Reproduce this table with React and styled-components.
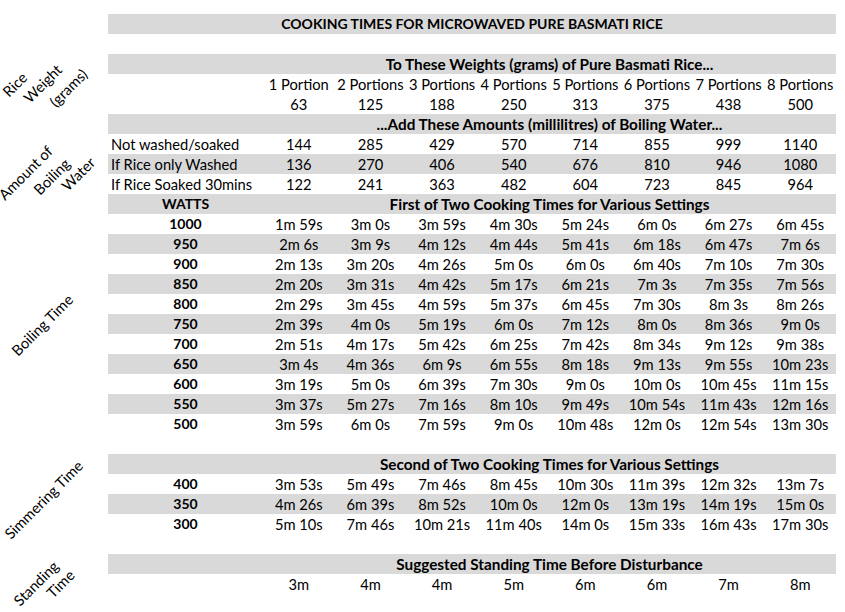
import React from 'react';
import styled, { createGlobalStyle } from 'styled-components';

const portions = ['1 Portion', '2 Portions', '3 Portions', '4 Portions', '5 Portions', '6 Portions', '7 Portions', '8 Portions'];
const weights = [63, 125, 188, 250, 313, 375, 438, 500];

const water = [
  { label: 'Not washed/soaked', values: [144, 285, 429, 570, 714, 855, 999, 1140] },
  { label: 'If Rice only Washed', values: [136, 270, 406, 540, 676, 810, 946, 1080], shade: true },
  { label: 'If Rice Soaked 30mins', values: [122, 241, 363, 482, 604, 723, 845, 964] },
];

const boiling = [
  [1000, '1m 59s', '3m 0s', '3m 59s', '4m 30s', '5m 24s', '6m 0s', '6m 27s', '6m 45s'],
  [950, '2m 6s', '3m 9s', '4m 12s', '4m 44s', '5m 41s', '6m 18s', '6m 47s', '7m 6s'],
  [900, '2m 13s', '3m 20s', '4m 26s', '5m 0s', '6m 0s', '6m 40s', '7m 10s', '7m 30s'],
  [850, '2m 20s', '3m 31s', '4m 42s', '5m 17s', '6m 21s', '7m 3s', '7m 35s', '7m 56s'],
  [800, '2m 29s', '3m 45s', '4m 59s', '5m 37s', '6m 45s', '7m 30s', '8m 3s', '8m 26s'],
  [750, '2m 39s', '4m 0s', '5m 19s', '6m 0s', '7m 12s', '8m 0s', '8m 36s', '9m 0s'],
  [700, '2m 51s', '4m 17s', '5m 42s', '6m 25s', '7m 42s', '8m 34s', '9m 12s', '9m 38s'],
  [650, '3m 4s', '4m 36s', '6m 9s', '6m 55s', '8m 18s', '9m 13s', '9m 55s', '10m 23s'],
  [600, '3m 19s', '5m 0s', '6m 39s', '7m 30s', '9m 0s', '10m 0s', '10m 45s', '11m 15s'],
  [550, '3m 37s', '5m 27s', '7m 16s', '8m 10s', '9m 49s', '10m 54s', '11m 43s', '12m 16s'],
  [500, '3m 59s', '6m 0s', '7m 59s', '9m 0s', '10m 48s', '12m 0s', '12m 54s', '13m 30s'],
];

const simmering = [
  [400, '3m 53s', '5m 49s', '7m 46s', '8m 45s', '10m 30s', '11m 39s', '12m 32s', '13m 7s'],
  [350, '4m 26s', '6m 39s', '8m 52s', '10m 0s', '12m 0s', '13m 19s', '14m 19s', '15m 0s'],
  [300, '5m 10s', '7m 46s', '10m 21s', '11m 40s', '14m 0s', '15m 33s', '16m 43s', '17m 30s'],
];

const standing = ['3m', '4m', '4m', '5m', '6m', '6m', '7m', '8m'];

const App = () => {
  return (
    <>
      <GlobalStyle />
      <Sheet>
        <SideLabel $row={3} $span={3}>
          <Tilt $x={9} $y={44}>Rice</Tilt>
          <Tilt $x={30} $y={50}>Weight</Tilt>
          <Tilt $x={56} $y={54}>(grams)</Tilt>
        </SideLabel>
        <SideLabel $row={6} $span={4}>
          <Tilt $x={5} $y={87}>Amount of</Tilt>
          <Tilt $x={40} $y={82}>Boiling</Tilt>
          <Tilt $x={68} $y={78}>Water</Tilt>
        </SideLabel>
        <SideLabel $row={10} $span={12}>
          <Tilt $x={18} $y={163}>Boiling Time</Tilt>
        </SideLabel>
        <SideLabel $row={23} $span={4}>
          <Tilt $x={11} $y={86}>Simmering Time</Tilt>
        </SideLabel>
        <SideLabel $row={28} $span={2}>
          <Tilt $x={20} $y={53}>Standing</Tilt>
          <Tilt $x={53} $y={45}>Time</Tilt>
        </SideLabel>

        <Row $shade $wide>
          <Banner $title>COOKING TIMES FOR MICROWAVED PURE BASMATI RICE</Banner>
        </Row>
        <Row />

        <Row $shade>
          <Banner>To These Weights (grams) of Pure Basmati Rice...</Banner>
        </Row>
        <Row>
          <Cell />
          {portions.map((p) => <Cell key={p}>{p}</Cell>)}
        </Row>
        <Row>
          <Cell />
          {weights.map((w) => <Cell key={w}>{w}</Cell>)}
        </Row>

        <Row $shade>
          <Banner>...Add These Amounts (millilitres) of Boiling Water...</Banner>
        </Row>
        {water.map((r) => (
          <Row key={r.label} $shade={r.shade}>
            <Cell $left>{r.label}</Cell>
            {r.values.map((v, i) => <Cell key={i}>{v}</Cell>)}
          </Row>
        ))}

        <Row $shade>
          <Cell $bold>WATTS</Cell>
          <Banner>First of Two Cooking Times for Various Settings</Banner>
        </Row>
        {boiling.map(([watts, ...times], i) => (
          <Row key={watts} $shade={i % 2 === 1}>
            <Cell $bold>{watts}</Cell>
            {times.map((t, j) => <Cell key={j}>{t}</Cell>)}
          </Row>
        ))}
        <Row />

        <Row $shade>
          <Banner>Second of Two Cooking Times for Various Settings</Banner>
        </Row>
        {simmering.map(([watts, ...times], i) => (
          <Row key={watts} $shade={i % 2 === 1}>
            <Cell $bold>{watts}</Cell>
            {times.map((t, j) => <Cell key={j}>{t}</Cell>)}
          </Row>
        ))}
        <Row />

        <Row $shade>
          <Banner>Suggested Standing Time Before Disturbance</Banner>
        </Row>
        <Row>
          <Cell />
          {standing.map((s, i) => <Cell key={i}>{s}</Cell>)}
        </Row>
      </Sheet>
    </>
  );
};

export default App;

const GlobalStyle = createGlobalStyle`
  body {
    margin: 0;
    min-height: 612px;
    background: #ffffff;
    color: #000000;
    font-family: Lato, 'Liberation Sans', sans-serif;
  }
`;

const Sheet = styled.div`
  display: grid;
  grid-template-columns: 108px 155px repeat(8, 71.625px);
  grid-auto-rows: 20px;
  padding: 14px 0 18px;
  width: 845px;
  font-size: 14.7px;
`;

const Row = styled.div`
  grid-column: ${(p) => (p.$wide ? '1 / -1' : '2 / -1')};
  display: grid;
  grid-template-columns: ${(p) => (p.$wide ? '1fr' : '155px repeat(8, 1fr)')};
  align-items: center;
  line-height: 20px;
  background: ${(p) => (p.$shade ? '#d9d9d9' : 'transparent')};
  margin-left: ${(p) => (p.$wide ? '108px' : '0')};
  white-space: nowrap;
`;

const Cell = styled.div`
  text-align: ${(p) => (p.$left ? 'left' : 'center')};
  padding-left: ${(p) => (p.$left ? '3px' : '0')};
  font-weight: ${(p) => (p.$bold ? 700 : 400)};
  font-size: ${(p) => (p.$bold ? '14px' : 'inherit')};
`;

const Banner = styled.div`
  grid-column: ${(p) => (p.$title ? '1 / -1' : '2 / -1')};
  text-align: center;
  font-weight: 700;
  font-size: ${(p) => (p.$title ? '14px' : '15.3px')};
`;

const SideLabel = styled.div`
  grid-column: 1;
  grid-row: ${(p) => `${p.$row} / span ${p.$span}`};
  position: relative;
`;

const Tilt = styled.span`
  position: absolute;
  left: ${(p) => p.$x}px;
  top: ${(p) => p.$y - 12}px;
  line-height: 12px;
  font-size: 14.7px;
  white-space: nowrap;
  transform-origin: 0 100%;
  transform: rotate(-45deg);
`;
